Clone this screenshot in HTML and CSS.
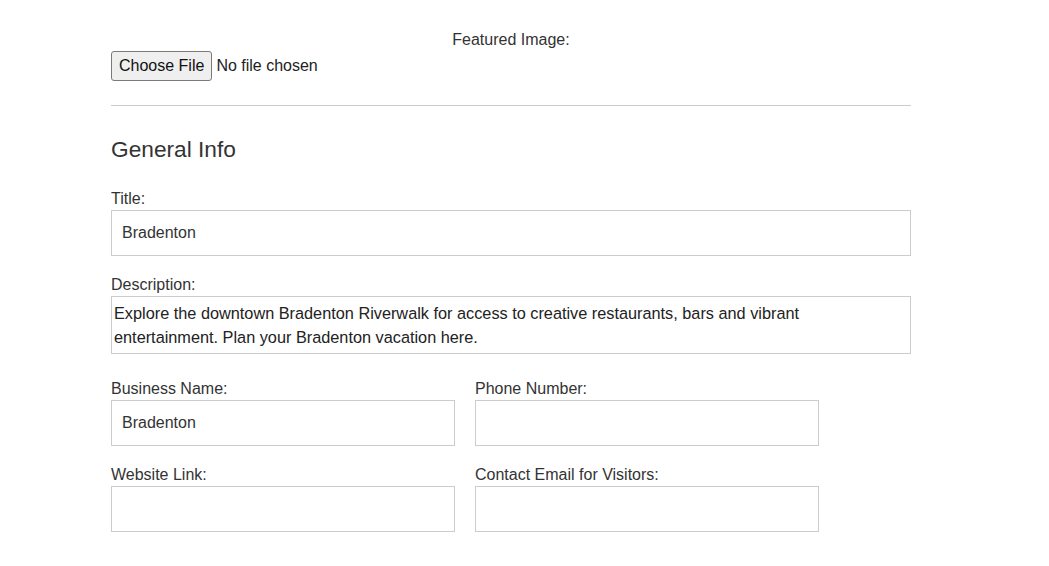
FILE: index.html
```html
<!DOCTYPE html>
<html lang="en">
<head>
<meta charset="utf-8">
<title>Edit Listing</title>
<link rel="stylesheet" href="styles.css">
</head>
<body>
<form class="form">
  <div class="featured">
    <label class="featured-label" for="featured">Featured Image:</label>
    <div class="file-row">
      <span class="file-btn">Choose File</span><span class="file-text">No file chosen</span>
    </div>
  </div>
  <hr class="divider">
  <h2 class="section-title">General Info</h2>
  <div class="field">
    <label class="label">Title:</label>
    <input class="input" type="text" value="Bradenton">
  </div>
  <div class="field field-desc">
    <label class="label">Description:</label>
    <textarea class="textarea">Explore the downtown Bradenton Riverwalk for access to creative restaurants, bars and vibrant entertainment. Plan your Bradenton vacation here.</textarea>
  </div>
  <div class="row">
    <div class="field">
      <label class="label">Business Name:</label>
      <input class="input" type="text" value="Bradenton">
    </div>
    <div class="field">
      <label class="label">Phone Number:</label>
      <input class="input" type="text" value="">
    </div>
  </div>
  <div class="row">
    <div class="field">
      <label class="label">Website Link:</label>
      <input class="input" type="text" value="">
    </div>
    <div class="field">
      <label class="label">Contact Email for Visitors:</label>
      <input class="input" type="text" value="">
    </div>
  </div>
</form>
</body>
</html>
```
FILE: styles.css
```css
* { box-sizing: border-box; }
html, body { margin: 0; padding: 0; background: #fff; }
body {
  font-family: "Liberation Sans", Arial, sans-serif;
  font-size: 16px;
  color: #333;
}
.form {
  width: 800px;
  margin-left: 111px;
  padding-top: 30px;
}
.featured-label {
  display: block;
  text-align: center;
  line-height: 20px;
}
.file-row {
  display: flex;
  align-items: center;
  margin-top: 1px;
  height: 30px;
}
.file-btn {
  display: inline-block;
  height: 30px;
  line-height: 28px;
  padding: 0 7px;
  border: 1px solid #7a7a7a;
  border-radius: 3px;
  background: #efefef;
  color: #111;
  font-size: 16px;
}
.file-text {
  margin-left: 4px;
  color: #222;
}
.divider {
  margin: 24px 0 0;
  border: 0;
  border-top: 1px solid #ccc;
  height: 0;
}
.section-title {
  margin: 30px 0 27px;
  font-size: 22.7px;
  font-weight: normal;
  line-height: 26px;
  color: #333;
}
.field {
  display: flex;
  flex-direction: column;
  margin-bottom: 19px;
}
.field-desc { margin-bottom: 25px; }
.label {
  line-height: 20px;
  margin-bottom: 1px;
}
.input {
  display: block;
  width: 100%;
  height: 46px;
  padding: 0 10px;
  border: 1px solid #ccc;
  border-radius: 0;
  font-family: inherit;
  font-size: 16px;
  color: #333;
  background: #fff;
  outline: none;
}
.textarea {
  display: block;
  width: 100%;
  height: 58px;
  padding: 4px 30px 4px 2px;
  border: 1px solid #ccc;
  border-radius: 0;
  font-family: "Liberation Sans", Arial, sans-serif;
  font-size: 16.3px;
  line-height: 24px;
  color: #222;
  resize: none;
  overflow: hidden;
  outline: none;
}
.row {
  display: grid;
  grid-template-columns: 344px 344px;
  column-gap: 20px;
}
```
